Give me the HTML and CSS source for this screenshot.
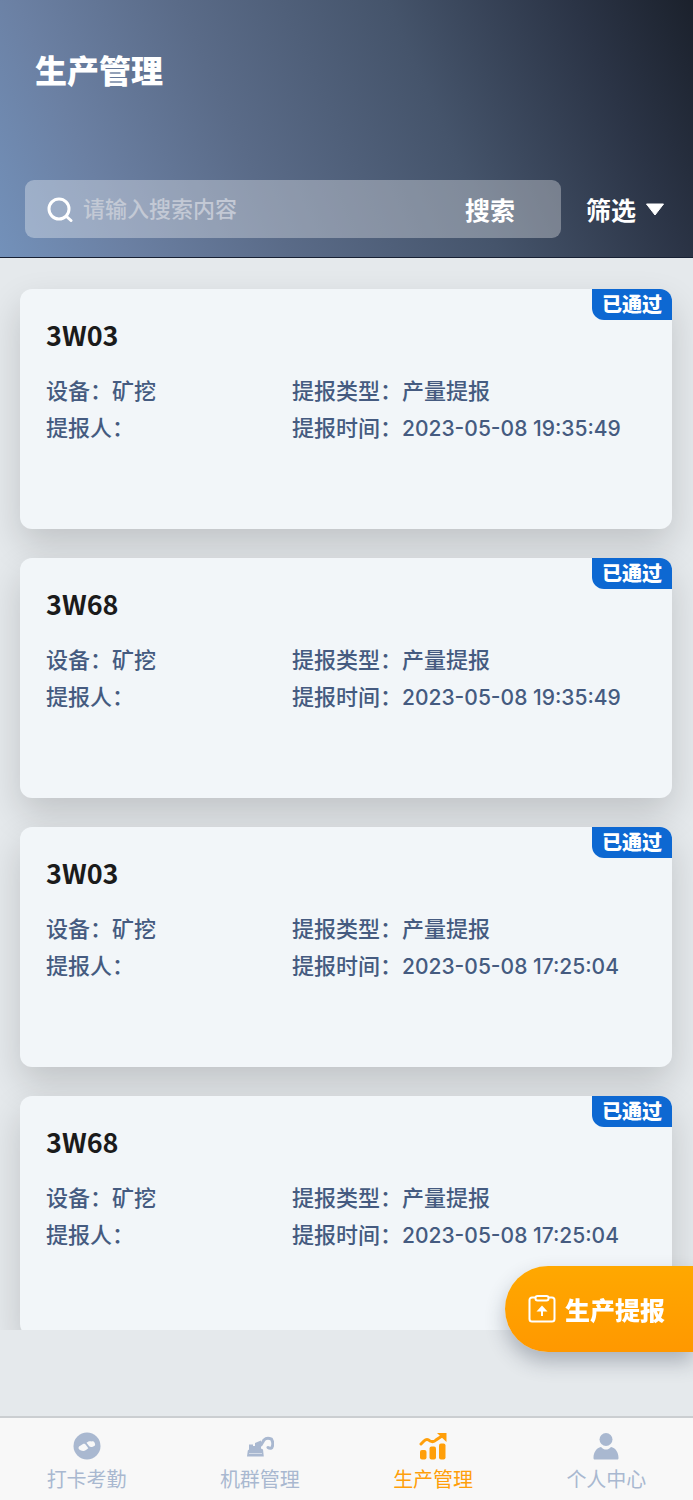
FILE: index.html
```
<!DOCTYPE html>
<html lang="zh-CN">
  <head>
    <meta charset="UTF-8" />
    <meta name="viewport" content="width=device-width, initial-scale=1.0" />
    <title>生产管理</title>
    <link rel="stylesheet" href="styles.css">
  </head>
  <body>
    <header class="header">
      <h1>生产管理</h1>
      <div class="toolbar">
        <form class="search">
          <svg class="search-icon" viewBox="0 0 26 26" aria-hidden="true">
            <circle cx="12" cy="13" r="10" />
            <path d="M19.500 20.500l4.500 4" />
          </svg>
          <input type="text" aria-label="搜索内容" placeholder="请输入搜索内容" />
          <button type="submit">搜索</button>
        </form>
        <button type="button" class="filter">
          筛选
          <svg class="caret" viewBox="0 0 20 14" aria-hidden="true">
            <path d="M1.500 2h17L10 13z" />
          </svg>
        </button>
      </div>
    </header>

    <main class="list">
      <article class="card">
        <span class="badge">已通过</span>
        <h2>3W03</h2>
        <div class="info">
          <p>设备：矿挖</p>
          <p>提报类型：产量提报</p>
          <p>提报人：</p>
          <p>提报时间：<time>2023-05-08 19:35:49</time></p>
        </div>
      </article>
      <article class="card">
        <span class="badge">已通过</span>
        <h2>3W68</h2>
        <div class="info">
          <p>设备：矿挖</p>
          <p>提报类型：产量提报</p>
          <p>提报人：</p>
          <p>提报时间：<time>2023-05-08 19:35:49</time></p>
        </div>
      </article>
      <article class="card">
        <span class="badge">已通过</span>
        <h2>3W03</h2>
        <div class="info">
          <p>设备：矿挖</p>
          <p>提报类型：产量提报</p>
          <p>提报人：</p>
          <p>提报时间：<time>2023-05-08 17:25:04</time></p>
        </div>
      </article>
      <article class="card">
        <span class="badge">已通过</span>
        <h2>3W68</h2>
        <div class="info">
          <p>设备：矿挖</p>
          <p>提报类型：产量提报</p>
          <p>提报人：</p>
          <p>提报时间：<time>2023-05-08 17:25:04</time></p>
        </div>
      </article>
    </main>

    <button type="button" class="report">
      <svg viewBox="0 0 28 28" aria-hidden="true">
        <path d="M7 2.500H4A2.500 2.500 0 0 0 1.500 5v19A2.500 2.500 0 0 0 4 26.500h20a2.500 2.500 0 0 0 2.500-2.500V5A2.500 2.500 0 0 0 24 2.500h-3" />
        <rect x="7.500" y="1" width="13" height="4.500" rx="2" />
        <path d="M14 21v-6" />
        <path class="solid" d="M14 10.500l5.500 6h-11z" />
      </svg>
      生产提报
    </button>

    <nav class="tabbar">
      <a href="#attendance">
        <svg viewBox="0 0 28 28" aria-hidden="true">
          <circle cx="14" cy="14" r="13.500" />
          <path class="cutout" d="M6 14.500l4-2.500c1.500-.5 2.500.3 3.300 1.500l2 2.800-2.300 1.700c-1.800 1.200-3.500 1-5 .5-2.200-.6-3.200-2.500-2-4zM13.500 10.800c1.500-1.800 3.500-2 5-1.300 1.500-.5 2.800.2 3.200 1.500 1 1.800.3 3.200-1.500 3.500-1.700.8-3.200.7-4-.3z" />
        </svg>
        打卡考勤
      </a>
      <a href="#fleet">
        <svg viewBox="0 0 28 28" aria-hidden="true">
          <path d="M1 24.500l.8-6L3 17.500v-5h4v1.500h2v-3l6-2.500v8l2 1 .8 7z" />
          <path class="arm" d="M15 13l3-5c2-2 5-2 7.500-.8 1.700 3 1.500 6.300.3 8.500-1.300.9-2.500.8-3.800-.2" />
          <path class="groove" d="M3 21.500h13" />
        </svg>
        机群管理
      </a>
      <a href="#production" class="active">
        <svg viewBox="0 0 28 28" aria-hidden="true">
          <rect x="1" y="18" width="6.500" height="9.500" rx="2" />
          <rect x="10.500" y="14.500" width="6.500" height="13" rx="2" />
          <rect x="20" y="11.500" width="6.500" height="16" rx="2" />
          <path class="trend" d="M2 12l3-3c2-2 4-2 6 0 2 1 4 1 6-1l6-4" />
          <path d="M18 1h9.500v9z" />
        </svg>
        生产管理
      </a>
      <a href="#profile">
        <svg viewBox="0 0 28 28" aria-hidden="true">
          <circle cx="14" cy="7.500" r="6.500" />
          <path d="M1.500 26c0-6 3-10 7.500-11 2 2 3 2.500 5 2.500s3-.5 5-2.500c4.500 1 7.500 5 7.500 11 0 1-.5 1.500-1.500 1.500H3c-1 0-1.500-.5-1.500-1.500z" />
        </svg>
        个人中心
      </a>
    </nav>
  </body>
</html>
```
FILE: styles.css
```
* {
  box-sizing: border-box;
}

body {
  font-family: Inter, "Noto Sans CJK SC", sans-serif;
  background-color: #e5e9ec;
  margin: 0;
  display: flex;
  flex-direction: column;
  height: 100vh;
}

h1,
h2,
p {
  margin: 0;
}

button,
input {
  font-family: inherit;
  border: none;
  background: none;
  padding: 0;
}

button {
  color: #ffffff;
  font-weight: bold;
  cursor: pointer;
}

.header {
  padding: 50px 28px 19px 25px;
  background: linear-gradient(66deg, #7391ba, #6b80a3 16%, #5a6b88 36%, #45546b 62%, #2b3446 85%, #1b212c);
  border-bottom: 1px solid #172033;
}

.header h1 {
  margin-left: 10px;
  color: #ffffff;
  font-size: 32px;
  line-height: 44px;
  font-weight: 900;
}

.toolbar {
  display: flex;
  align-items: center;
  gap: 25px;
  margin-top: 86px;
}

.search {
  flex: 1;
  min-width: 0;
  display: flex;
  align-items: center;
  height: 58px;
  padding: 0 46px 0 22px;
  border-radius: 9px;
  background-color: rgba(255, 255, 255, 0.32);
}

.search-icon {
  width: 26px;
  height: 26px;
  fill: none;
  stroke: #ffffff;
  stroke-width: 3;
  stroke-linecap: round;
}

.search input {
  flex: 1;
  min-width: 0;
  margin-left: 10px;
  color: #ffffff;
  font-size: 22px;
  font-weight: 500;
  line-height: 32px;
  outline: none;
}

.search input::placeholder {
  color: #c3c9d5;
}

.search button,
.filter {
  font-size: 25px;
}

.filter {
  display: flex;
  align-items: center;
  gap: 9px;
}

.caret {
  width: 20px;
  height: 14px;
  fill: #ffffff;
  stroke: #ffffff;
  stroke-linejoin: round;
}

.list {
  flex: 1;
  min-height: 0;
  display: flex;
  flex-direction: column;
  gap: 29px;
  margin-bottom: 86px;
  padding: 31px 21px 0 20px;
  overflow-y: auto;
  scrollbar-width: none;
}

.card {
  position: relative;
  flex: none;
  min-height: 240px;
  padding: 27px 26px;
  border-radius: 12px;
  background-color: #f2f6f9;
  box-shadow: 0 16px 36px rgba(0, 0, 0, 0.16);
}

.card h2 {
  color: #1b1b1b;
  font-family: "Noto Sans CJK SC", sans-serif;
  font-size: 27px;
  line-height: 38px;
}

.badge {
  position: absolute;
  top: 0;
  right: 0;
  width: 80px;
  padding-top: 1px;
  border-radius: 0 12px 0 12px;
  background-color: #0d68d2;
  color: #ffffff;
  font-size: 20px;
  font-weight: 900;
  line-height: 30px;
  text-align: center;
}

.info {
  display: grid;
  grid-template-columns: 41% 1fr;
  margin-top: 19px;
  color: #455b80;
  font-size: 22px;
  font-weight: 500;
  line-height: 37px;
  white-space: nowrap;
}

.info time {
  font-size: 21px;
}

.report {
  position: fixed;
  right: 0;
  bottom: 148px;
  display: flex;
  align-items: center;
  gap: 9px;
  height: 86px;
  padding: 0 28px 0 23px;
  border-radius: 43px 0 0 43px;
  background: linear-gradient(#ffa800, #ff9800);
  box-shadow: 0 10px 20px rgba(40, 50, 70, 0.3);
  font-size: 25px;
  font-weight: 900;
}

.report svg {
  width: 28px;
  height: 28px;
  fill: none;
  stroke: #ffffff;
  stroke-width: 2;
}

.report .solid {
  fill: #ffffff;
  stroke: none;
}

.tabbar {
  display: flex;
  height: 84px;
  border-top: 2px solid #cbced1;
  background-color: #f8f8f8;
}

.tabbar a {
  flex: 1;
  display: flex;
  flex-direction: column;
  align-items: center;
  gap: 6px;
  padding-top: 14px;
  color: #a9b8d0;
  font-size: 20px;
  line-height: 28px;
  text-decoration: none;
}

.tabbar .active {
  color: #ff9f0a;
}

.tabbar svg {
  width: 28px;
  height: 28px;
  fill: currentColor;
}

.tabbar .cutout {
  fill: #f8f8f8;
}

.tabbar .arm,
.tabbar .trend {
  fill: none;
  stroke: currentColor;
  stroke-width: 3;
  stroke-linecap: round;
}

.tabbar .groove {
  fill: none;
  stroke: #d3dbe7;
}
```
